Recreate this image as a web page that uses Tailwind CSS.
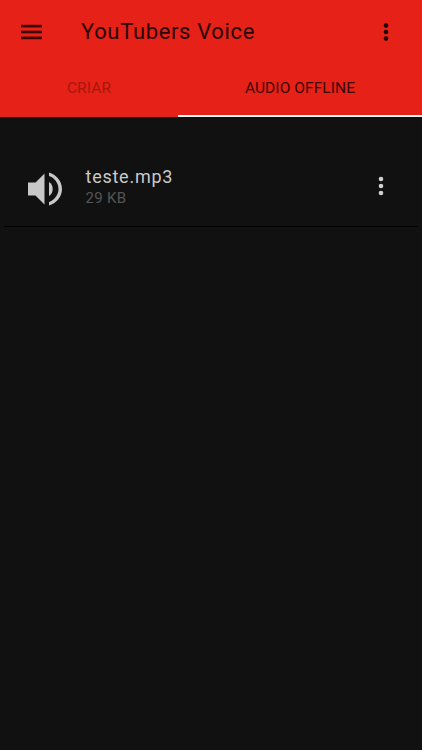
<!DOCTYPE html>
<html>
<head>
<meta charset="utf-8">
<script src="https://cdn.jsdelivr.net/npm/@tailwindcss/browser@4"></script>
</head>
<body class="bg-[#111111] font-['Roboto',sans-serif]">
<div class="w-[422px] h-[750px] flex flex-col overflow-hidden bg-[#111111]">
  <header class="h-[117px] bg-[#e62117] flex flex-col shrink-0">
    <div class="h-[64px] flex items-center pl-[21px] pr-[33px]">
      <svg class="w-[22px] h-[16px] shrink-0" viewBox="0 0 22 16" fill="#3a0404"><rect y="0.800" width="21" height="2.600"/><rect y="6.700" width="21" height="2.600"/><rect y="12.600" width="21" height="2.600"/></svg>
      <div class="ml-[38px] text-[22px] leading-[28px] tracking-[0.65px] text-[#2a0505]">YouTubers Voice</div>
      <svg class="ml-auto w-[6px] h-[18px] shrink-0" viewBox="0 0 6 18" fill="#200303"><circle cx="3" cy="2.500" r="2.300"/><circle cx="3" cy="9" r="2.300"/><circle cx="3" cy="15.500" r="2.300"/></svg>
    </div>
    <div class="flex-1 flex">
      <div class="w-[178px] flex items-center justify-center pb-[3px] text-[15.500px] tracking-[0.1px] text-[#a81610]">CRIAR</div>
      <div class="flex-1 flex items-center justify-center pb-[1px] border-b-[2px] border-[#f5f5f5] text-[15.500px] tracking-[0.08px] text-[#3a0606]">AUDIO OFFLINE</div>
    </div>
  </header>
  <section class="mt-[33px] mx-[4px] h-[77px] border-b border-[#000000] flex items-start relative">
    <svg class="absolute left-[23px] top-[21px] w-[36px] h-[36px]" viewBox="0 0 36 36" fill="#c8c8c8"><path d="M1 11.500h7.500L17.500 2.500v31l-9-9H1z"/><path d="M22 11c2.300 1.300 3.700 4 3.700 7s-1.400 5.700-3.700 7z"/><path d="M22 1.500c7 1.700 13 8.700 13 16.500s-6 14.800-13 16.500v-3.600c5.200-1.600 9.500-7 9.500-12.900S27.200 6.700 22 5.100z"/></svg>
    <div class="ml-[81.500px] mt-[16px]">
      <div class="text-[18px] leading-[22px] tracking-[0.75px] text-[#c9c9c9]">teste.mp3</div>
      <div class="text-[15px] leading-[20px] tracking-[0.3px] text-[#555555]">29 KB</div>
    </div>
    <svg class="ml-auto mr-[34px] mt-[26px] w-[6px] h-[20px] shrink-0" viewBox="0 0 6 20" fill="#d0d0d0"><circle cx="3" cy="3" r="2.300"/><circle cx="3" cy="10" r="2.300"/><circle cx="3" cy="17" r="2.300"/></svg>
  </section>
</div>
</body>
</html>
